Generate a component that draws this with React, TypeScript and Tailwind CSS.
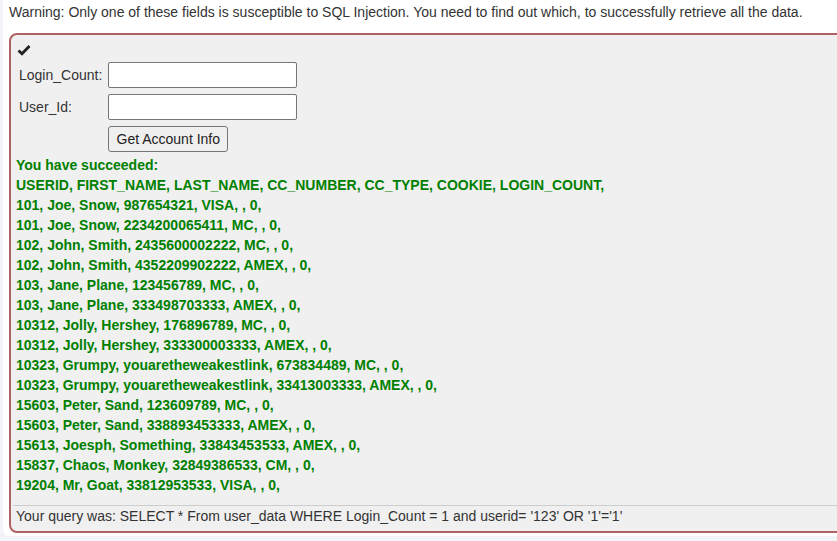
import React from 'react'

const rows = [
  '101, Joe, Snow, 987654321, VISA, , 0,',
  '101, Joe, Snow, 2234200065411, MC, , 0,',
  '102, John, Smith, 2435600002222, MC, , 0,',
  '102, John, Smith, 4352209902222, AMEX, , 0,',
  '103, Jane, Plane, 123456789, MC, , 0,',
  '103, Jane, Plane, 333498703333, AMEX, , 0,',
  '10312, Jolly, Hershey, 176896789, MC, , 0,',
  '10312, Jolly, Hershey, 333300003333, AMEX, , 0,',
  '10323, Grumpy, youaretheweakestlink, 673834489, MC, , 0,',
  '10323, Grumpy, youaretheweakestlink, 33413003333, AMEX, , 0,',
  '15603, Peter, Sand, 123609789, MC, , 0,',
  '15603, Peter, Sand, 338893453333, AMEX, , 0,',
  '15613, Joesph, Something, 33843453533, AMEX, , 0,',
  '15837, Chaos, Monkey, 32849386533, CM, , 0,',
  '19204, Mr, Goat, 33812953533, VISA, , 0,',
]

function Check() {
  return (
    <svg width="14" height="12" viewBox="0 0 14 12" className="block">
      <path d="M1.5 6.5 L5 9.8 L12.5 2" fill="none" stroke="#222" strokeWidth="2.8" strokeLinejoin="miter" />
    </svg>
  )
}

export default function App() {
  return (
    <div className="h-[541px] w-[837px] overflow-hidden bg-[#f3f4f7] pl-[3px] font-['Liberation_Sans',Arial,sans-serif] text-[14px] text-[#333]">
      <div className="w-[900px] rounded-bl-md bg-white pb-[3px]">
        <p className="h-[33px] pl-[6px] pt-[4px] leading-[16px]">
          Warning: Only one of these fields is susceptible to SQL Injection. You need to find out which, to successfully retrieve all the data.
        </p>
        <div className="ml-[6px] rounded-lg border-2 border-[#ad6363] bg-[#f0f0f0] pl-[5px] pr-2">
          <div className="flex h-[24px] items-end pl-[1px] pb-[3px]">
            <Check />
          </div>
          <table className="border-separate border-spacing-0">
            <tbody>
              <tr>
                <td className="p-[3px] align-middle">Login_Count:</td>
                <td className="p-[3px]">
                  <input type="text" className="block h-[26px] w-[189px] rounded-[2px] border border-[#767676] bg-white px-1" />
                </td>
              </tr>
              <tr>
                <td className="p-[3px] align-middle">User_Id:</td>
                <td className="p-[3px]">
                  <input type="text" className="block h-[26px] w-[189px] rounded-[2px] border border-[#767676] bg-white px-1" />
                </td>
              </tr>
              <tr>
                <td className="p-[3px]"></td>
                <td className="p-[3px]">
                  <button className="block h-[26px] w-[120px] rounded-[3px] border border-[#767676] bg-[#efefef] text-[14px] text-[#222]">
                    Get Account Info
                  </button>
                </td>
              </tr>
            </tbody>
          </table>
          <div className="text-[14px] font-bold leading-[20px] text-[#008000]">
            <div>You have succeeded:</div>
            <div>USERID, FIRST_NAME, LAST_NAME, CC_NUMBER, CC_TYPE, COOKIE, LOGIN_COUNT,</div>
            {rows.map((r, i) => (
              <div key={i}>{r}</div>
            ))}
          </div>
          <div className="mt-[10px] -ml-[3px] border-t border-[#cccccc]" />
          <div className="h-[25px] pt-[2px] leading-[16px]">
            Your query was: SELECT * From user_data WHERE Login_Count = 1 and userid= '123' OR '1'='1'
          </div>
        </div>
      </div>
    </div>
  )
}
